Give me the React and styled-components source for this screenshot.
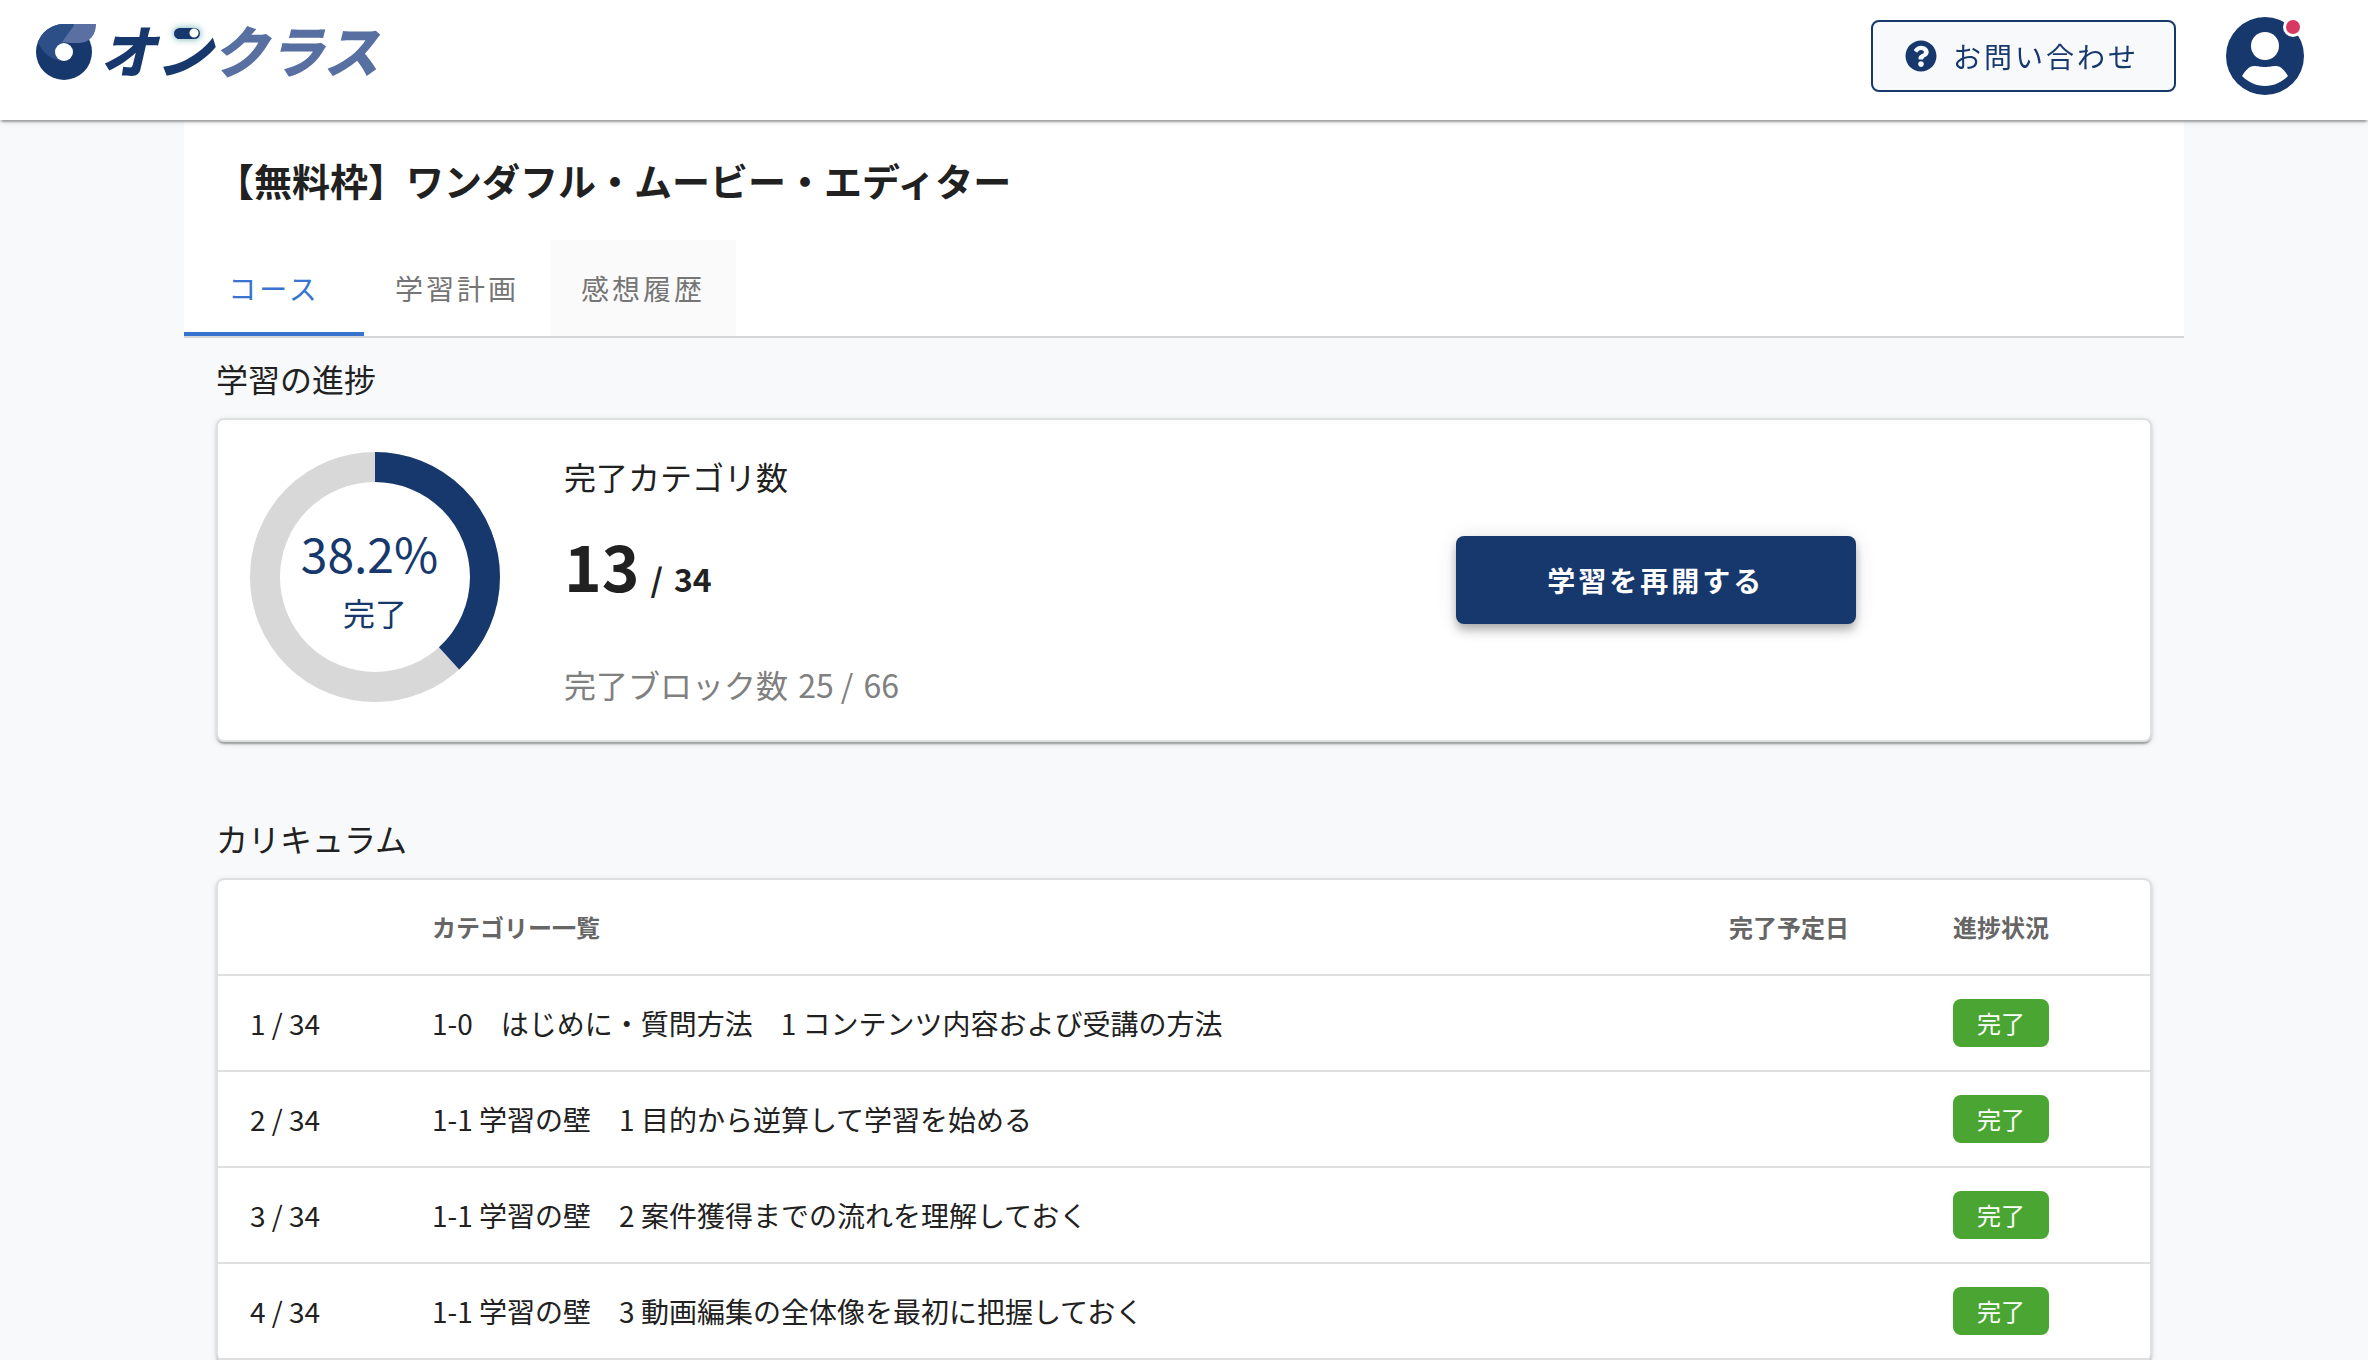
import React from 'react'
import styled, { createGlobalStyle } from 'styled-components'
import { FaQuestionCircle } from 'react-icons/fa'

const tabs = ['コース', '学習計画', '感想履歴']

const categories = [
    { id: 1, title: '1-0　はじめに・質問方法　1 コンテンツ内容および受講の方法' },
    { id: 2, title: '1-1 学習の壁　1 目的から逆算して学習を始める' },
    { id: 3, title: '1-1 学習の壁　2 案件獲得までの流れを理解しておく' },
    { id: 4, title: '1-1 学習の壁　3 動画編集の全体像を最初に把握しておく' },
]

const total = 34
const completed = 13

function LogoMark() {
    return (
        <svg width="60" height="56" viewBox="0 0 60 56" aria-hidden="true">
            <circle cx="28" cy="28" r="28" fill="#17386d" />
            <path d="M2 18C6 29 16 37 28 37L28 18L39 0H28A28 28 0 0 0 2 18Z" fill="#2b4f86" />
            <path d="M39 0H60C60 10 54 19 43 19C37 19 31 19 26 18Z" fill="#5a70a2" />
            <circle cx="28" cy="28" r="9" fill="#fff" />
        </svg>
    )
}

function Avatar() {
    return (
        <svg width="78" height="78" viewBox="0 0 78 78" aria-hidden="true">
            <circle cx="39" cy="39" r="39" fill="#17386d" />
            <circle cx="39" cy="29" r="14" fill="#fff" />
            <path
                d="M16 59C19 54 23 49 28 49C32 49 34 50 39 50C44 50 46 49 50 49C55 49 59 54 62 59C56 65 48 69 39 69C30 69 22 65 16 59Z"
                fill="#fff"
            />
            <circle cx="67" cy="10" r="10" fill="#fff" />
            <circle cx="67" cy="10" r="7" fill="#d73963" />
        </svg>
    )
}

function ProgressChart({ rate }) {
    const length = 2 * Math.PI * 110
    return (
        <Chart>
            <svg width="250" height="250" viewBox="0 0 250 250" aria-hidden="true">
                <g fill="none" strokeWidth="30" transform="rotate(-90 125 125)">
                    <circle cx="125" cy="125" r="110" stroke="#d8d8d8" />
                    <circle
                        cx="125"
                        cy="125"
                        r="110"
                        stroke="#17386d"
                        strokeDasharray={`${length * rate / 100} ${length}`}
                    />
                </g>
            </svg>
            <ChartLabel>
                <p className="rate">{rate}%</p>
                <p>完了</p>
            </ChartLabel>
        </Chart>
    )
}

function App() {
    return (
        <Shell>
            <GlobalStyle />
            <Header>
                <Logo href="#">
                    <LogoMark />
                    <Wordmark>
                        オ<Switched>ン</Switched><span className="light">クラス</span>
                    </Wordmark>
                </Logo>
                <HeaderMenu>
                    <ContactButton type="button">
                        <FaQuestionCircle size={32} />
                        お問い合わせ
                    </ContactButton>
                    <AvatarButton type="button" aria-label="アカウント">
                        <Avatar />
                    </AvatarButton>
                </HeaderMenu>
            </Header>
            <Container>
                <CourseHead>
                    <h1>【無料枠】ワンダフル・ムービー・エディター</h1>
                    <Tabs role="tablist">
                        {tabs.map((tab, i) => (
                            <Tab key={tab} type="button" role="tab" aria-selected={i === 0} $active={i === 0} $hovered={i === 2}>
                                {tab}
                            </Tab>
                        ))}
                    </Tabs>
                </CourseHead>
                <Content>
                    <SectionTitle>学習の進捗</SectionTitle>
                    <ProgressCard>
                        <ProgressChart rate={38.2} />
                        <Counts>
                            <p>完了カテゴリ数</p>
                            <p className="category">
                                <strong>{completed}</strong>
                                <b>/</b>
                                <b>{total}</b>
                            </p>
                            <p className="block">完了ブロック数 <span>25 /</span> <span>66</span></p>
                        </Counts>
                        <Action>
                            <ResumeButton type="button">学習を再開する</ResumeButton>
                        </Action>
                    </ProgressCard>
                    <SectionTitle>カリキュラム</SectionTitle>
                    <Card>
                        <Table>
                            <thead>
                                <tr>
                                    <th className="number" aria-label="番号"></th>
                                    <th>カテゴリー一覧</th>
                                    <th className="date">完了予定日</th>
                                    <th className="status">進捗状況</th>
                                </tr>
                            </thead>
                            <tbody>
                                {categories.map(({ id, title }) => (
                                    <tr key={id}>
                                        <td>{id} / {total}</td>
                                        <td>{title}</td>
                                        <td></td>
                                        <td><Chip>完了</Chip></td>
                                    </tr>
                                ))}
                            </tbody>
                        </Table>
                    </Card>
                </Content>
            </Container>
        </Shell>
    )
}

const GlobalStyle = createGlobalStyle`
    * {
        box-sizing: border-box;
    }
    body {
        margin: 0;
        background: #f7f9fb;
        color: #212121;
        font-family: "Noto Sans CJK JP", "Noto Sans", sans-serif;
        font-size: 28px;
    }
    h1, h2, p {
        margin: 0;
    }
    button {
        font-family: inherit;
        cursor: pointer;
    }
`

const Shell = styled.div`
    height: 100vh;
    overflow-y: auto;
    scrollbar-width: none;
`

const Header = styled.header`
    position: sticky;
    top: 0;
    z-index: 1;
    display: flex;
    justify-content: space-between;
    align-items: center;
    height: 120px;
    padding: 0 64px 8px 36px;
    background: #fff;
    box-shadow: 0 4px 2px -2px rgba(0, 0, 0, 0.2), 0 2px 2px rgba(0, 0, 0, 0.14), 0 2px 6px rgba(0, 0, 0, 0.12);
`

const Logo = styled.a`
    display: flex;
    align-items: center;
    gap: 4px;
    padding-bottom: 8px;
    color: #17386d;
    text-decoration: none;
`

const Wordmark = styled.span`
    padding-bottom: 6px;
    font-size: 56px;
    font-weight: 900;
    font-style: italic;
    line-height: 56px;
    .light {
        color: #586fa1;
    }
`

/* toggle switch laid over the first stroke of the letter */
const Switched = styled.span`
    position: relative;
    &::before {
        content: "";
        position: absolute;
        top: 20px;
        left: 18px;
        width: 26px;
        height: 11px;
        border-radius: 6px;
        background: radial-gradient(circle at 20px 5px, #fff 4px, #17386d 5px);
        box-shadow: 0 0 6px 1px rgba(60, 150, 150, 0.6), 0 0 0 5px #fff, -8px 8px 0 4px #fff;
    }
`

const HeaderMenu = styled.div`
    display: flex;
    align-items: center;
    gap: 50px;
`

const ContactButton = styled.button`
    display: flex;
    align-items: center;
    gap: 16px;
    height: 72px;
    padding: 0 35px 0 32px;
    border: 2px solid #17386d;
    border-radius: 8px;
    background: #f7f9fb;
    color: #17386d;
    font-size: 28px;
    letter-spacing: 3px;
`

const AvatarButton = styled.button`
    display: flex;
    padding: 0;
    border: 0;
    background: none;
`

const Container = styled.main`
    max-width: 2000px;
    margin: 0 auto;
`

const CourseHead = styled.div`
    border-bottom: 2px solid #d3d5d6;
    background: #fff;
    h1 {
        padding: 32px;
        font-size: 38px;
        font-weight: bold;
        line-height: 56px;
    }
`

const Tabs = styled.div`
    display: flex;
`

const Tab = styled.button`
    min-width: 180px;
    height: 96px;
    padding: 4px 31px 0;
    border: 0;
    border-bottom: 4px solid ${({ $active }) => ($active ? '#3873cf' : 'transparent')};
    background: ${({ $hovered }) => ($hovered ? '#fafafa' : 'transparent')};
    color: ${({ $active }) => ($active ? '#3873cf' : '#757575')};
    font-size: 28px;
    letter-spacing: 3px;
`

const Content = styled.div`
    padding: 16px 32px;
`

const SectionTitle = styled.h2`
    margin-bottom: 16px;
    font-size: 32px;
    font-weight: normal;
    line-height: 48px;
`

const Card = styled.section`
    border: 2px solid #dfe1e1;
    border-radius: 8px;
    background: #fff;
    box-shadow: 0 4px 2px -2px rgba(0, 0, 0, 0.2), 0 2px 2px rgba(0, 0, 0, 0.14), 0 2px 6px rgba(0, 0, 0, 0.12);
`

const ProgressCard = styled(Card)`
    display: grid;
    grid-template-columns: 250px 3fr 4fr;
    margin-bottom: 72px;
    padding: 32px;
`

const Chart = styled.div`
    position: relative;
    height: 256px;
`

const ChartLabel = styled.div`
    position: absolute;
    inset: 0;
    display: flex;
    flex-direction: column;
    align-items: center;
    gap: 4px;
    padding-top: 68px;
    color: #17386d;
    font-size: 32px;
    line-height: 48px;
    .rate {
        padding-right: 11px;
        font-size: 48px;
        line-height: 64px;
    }
`

const Counts = styled.div`
    padding-left: 64px;
    font-size: 32px;
    line-height: 48px;
    .category {
        display: flex;
        align-items: baseline;
        gap: 11px;
        margin: 16px 0 48px;
    }
    strong {
        font-size: 64px;
        line-height: 96px;
    }
    .block {
        color: #808080;
    }
    .block span {
        margin-left: 3px;
    }
`

const Action = styled.div`
    display: flex;
    justify-content: center;
    align-items: center;
`

const ResumeButton = styled.button`
    width: 400px;
    height: 88px;
    border: 0;
    border-radius: 8px;
    background: #17386d;
    box-shadow: 0 4px 8px -2px rgba(0, 0, 0, 0.2), 0 8px 10px rgba(0, 0, 0, 0.14), 0 2px 20px rgba(0, 0, 0, 0.12);
    color: #fff;
    font-size: 28px;
    font-weight: bold;
    letter-spacing: 3px;
`

const Table = styled.table`
    width: 100%;
    border-collapse: separate;
    border-spacing: 0;
    table-layout: fixed;
    th, td {
        height: 96px;
        padding: 0 32px;
        border-bottom: 2px solid #dfdfdf;
        text-align: left;
    }
    th {
        padding-bottom: 2px;
        color: #666;
        font-size: 24px;
        font-weight: bold;
    }
    .number {
        width: 182px;
    }
    .date {
        width: 224px;
    }
    .status {
        width: 229px;
    }
`

const Chip = styled.span`
    display: block;
    width: 96px;
    border-radius: 8px;
    background: #4aa532;
    color: #fff;
    font-size: 24px;
    line-height: 48px;
    text-align: center;
`

export default App
